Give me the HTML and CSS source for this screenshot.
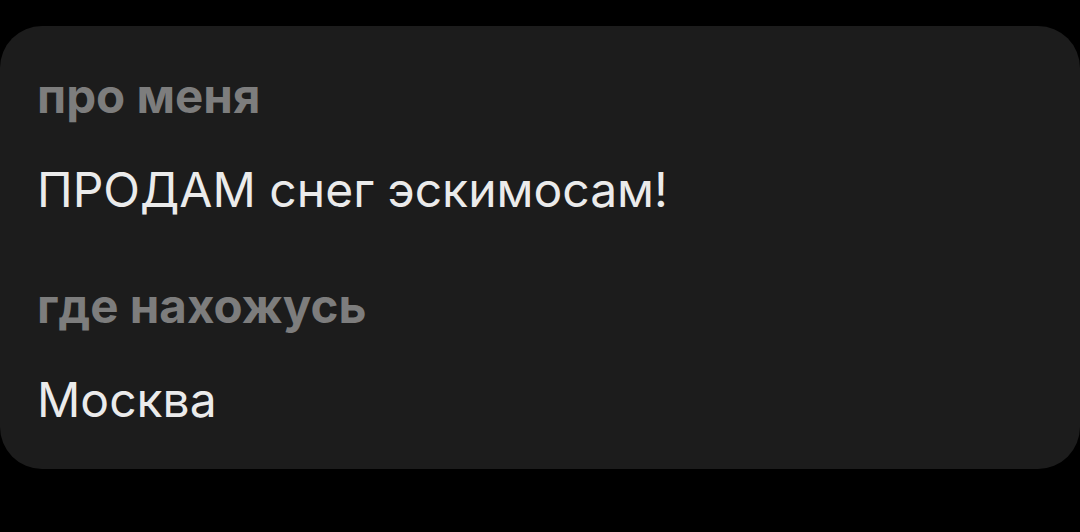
FILE: index.html
```html
<!DOCTYPE html>
<html lang="ru">
<head>
<meta charset="utf-8">
<link rel="stylesheet" href="styles.css">
</head>
<body>
<section class="card">
  <div class="field">
    <div class="label">про меня</div>
    <div class="value">ПРОДАМ снег эскимосам!</div>
  </div>
  <div class="field">
    <div class="label">где нахожусь</div>
    <div class="value">Москва</div>
  </div>
</section>
</body>
</html>
```

FILE: styles.css
```css
html, body {
  margin: 0;
  background: #000;
}
body {
  padding-top: 26px;
  font-family: Inter, "Noto Sans", sans-serif;
}
.card {
  background: #1c1c1c;
  border-radius: 42px;
  height: 443px;
  box-sizing: border-box;
  padding: 46px 37px 0;
  display: flex;
  flex-direction: column;
  gap: 68px;
}
.field {
  display: flex;
  flex-direction: column;
  gap: 46px;
}
.label {
  color: #7d7d7d;
  font-weight: 700;
  font-size: 47.5px;
  line-height: 48px;
}
.value {
  color: #ebebeb;
  font-weight: 400;
  font-size: 48px;
  line-height: 48px;
}
```
